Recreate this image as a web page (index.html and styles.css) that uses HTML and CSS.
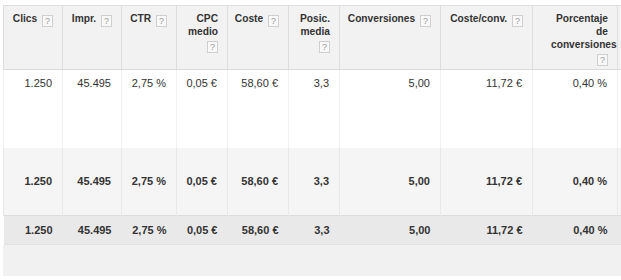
FILE: index.html
```html
<!DOCTYPE html>
<html lang="es">
<head>
<meta charset="utf-8">
<title>Estadísticas</title>
<link rel="stylesheet" href="styles.css">
</head>
<body>
<div class="wrap">
<table class="grid">
  <colgroup>
    <col class="c1"><col class="c2"><col class="c3"><col class="c4"><col class="c5">
    <col class="c6"><col class="c7"><col class="c8"><col class="c9"><col class="c10">
  </colgroup>
  <thead>
    <tr>
      <th>Clics <span class="help">?</span></th>
      <th>Impr. <span class="help">?</span></th>
      <th>CTR <span class="help">?</span></th>
      <th>CPC medio <span class="help">?</span></th>
      <th>Coste <span class="help">?</span></th>
      <th>Posic. media <span class="help">?</span></th>
      <th>Conversiones <span class="help">?</span></th>
      <th>Coste/conv. <span class="help">?</span></th>
      <th class="th-narrow">Porcentaje de conversiones <span class="help">?</span></th>
      <th></th>
    </tr>
  </thead>
  <tbody>
    <tr class="row-a">
      <td>1.250</td><td>45.495</td><td>2,75 %</td><td>0,05 €</td><td>58,60 €</td>
      <td>3,3</td><td>5,00</td><td>11,72 €</td><td>0,40 %</td><td></td>
    </tr>
    <tr class="row-b">
      <td>1.250</td><td>45.495</td><td>2,75 %</td><td>0,05 €</td><td>58,60 €</td>
      <td>3,3</td><td>5,00</td><td>11,72 €</td><td>0,40 %</td><td></td>
    </tr>
    <tr class="row-total">
      <td>1.250</td><td>45.495</td><td>2,75 %</td><td>0,05 €</td><td>58,60 €</td>
      <td>3,3</td><td>5,00</td><td>11,72 €</td><td>0,40 %</td><td></td>
    </tr>
  </tbody>
</table>
<div class="footer"></div>
</div>
</body>
</html>
```
FILE: styles.css
```css
html, body {
  margin: 0;
  padding: 0;
  background: #ffffff;
  overflow: hidden;
}
body {
  width: 621px;
  height: 280px;
  font-family: "Liberation Sans", Arial, sans-serif;
  font-size: 11px;
  color: #333333;
}
.wrap {
  padding: 5px 0 0 3px;
  width: 640px;
}
.grid {
  border-collapse: collapse;
  table-layout: fixed;
  width: 634px;
}
.c1 { width: 59px; }
.c2 { width: 59px; }
.c3 { width: 55px; }
.c4 { width: 51px; }
.c5 { width: 61px; }
.c6 { width: 51px; }
.c7 { width: 101px; }
.c8 { width: 92px; }
.c9 { width: 85px; }
.c10 { width: 20px; }

.grid th {
  background: #f2f2f2;
  border: 1px solid #dedede;
  border-bottom-color: #dadada;
  height: 64px;
  padding: 6px 9px 0 4px;
  text-align: right;
  vertical-align: top;
  font-weight: bold;
  font-size: 10.2px;
  line-height: 13px;
  color: #333333;
  box-sizing: border-box;
}
.grid th.th-narrow {
  padding-left: 18px;
}
.help {
  display: inline-block;
  width: 9px;
  height: 10px;
  border: 1px solid #cfcfcf;
  background: #f8f8f8;
  color: #9a9a9a;
  font-size: 9px;
  font-weight: normal;
  line-height: 10px;
  text-align: center;
  vertical-align: -2px;
  margin-left: 2px;
}
.grid td {
  text-align: right;
  padding: 0 10px 0 4px;
  line-height: 13px;
  white-space: nowrap;
}
.row-a td {
  background: #ffffff;
  height: 78px;
  vertical-align: top;
  padding-top: 7px;
  border-left: 1px solid #f0f0f0;
  border-right: 1px solid #f0f0f0;
  box-sizing: border-box;
}
.row-b td {
  background: #f5f5f5;
  height: 68px;
  vertical-align: middle;
  font-weight: bold;
  border-left: 1px solid #e8e8e8;
  border-right: 1px solid #e8e8e8;
  box-sizing: border-box;
}
.row-total td {
  background: #e9e9e9;
  height: 29px;
  vertical-align: middle;
  font-weight: bold;
  border-top: 1px solid #dcdcdc;
  border-bottom: 1px solid #e2e2e2;
  box-sizing: border-box;
}
.footer {
  height: 31px;
  background: #f1f1f1;
  width: 618px;
}
```
